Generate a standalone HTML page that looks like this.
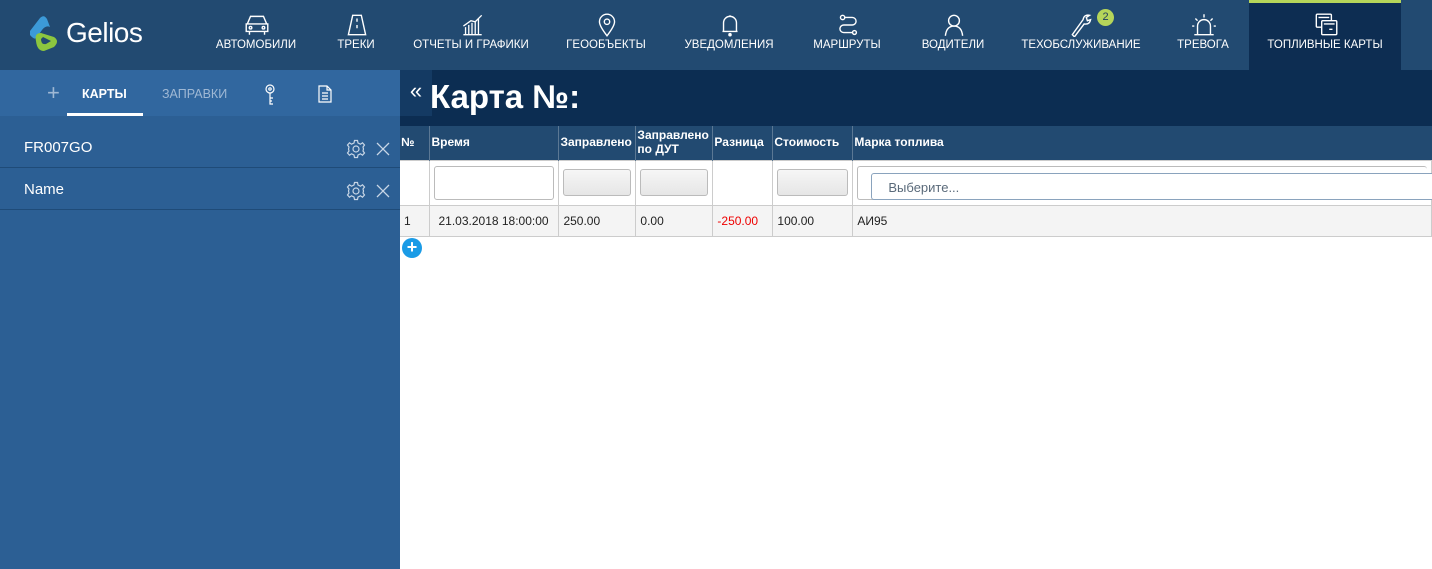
<!DOCTYPE html>
<html><head><meta charset="utf-8"><style>
*{box-sizing:border-box;margin:0;padding:0}
body{width:1432px;height:569px;overflow:hidden;background:#fff;font-family:"Liberation Sans","DejaVu Sans",sans-serif;position:relative}
.hdr{position:absolute;left:0;top:0;width:1432px;height:70px;background:#224a71}
.logo{position:absolute;left:24px;top:13px}
.logo span{position:absolute;left:42px;top:4px;color:#fff;font-size:28px;letter-spacing:-0.5px}
.nav{position:absolute;top:0;height:70px;text-align:center;color:#fff;font-size:11.5px}
.nav svg{position:absolute;top:13px;left:50%;margin-left:-13px;width:28px;height:24px}
.nav .t{position:absolute;top:39px;left:0;right:0;white-space:nowrap}
.act{background:#0d2d52;border-top:3px solid #b5d55a}
.side{position:absolute;left:0;top:70px;width:400px;height:499px;background:#2c5f94}
.tabs{position:absolute;left:0;top:70px;width:400px;height:46px;background:#31679f}
.item{position:absolute;left:0;width:400px;height:42px;border-bottom:1px solid #1f4b78;color:#fff;font-size:15px;padding:13px 0 0 24px}
.title{position:absolute;left:400px;top:70px;width:1032px;height:56px;background:#0c2d52}
.title h1{position:absolute;left:30px;top:8px;color:#fff;font-size:33px;font-weight:bold}
.coll{position:absolute;left:400px;top:70px;width:32px;height:46px;background:#143a63;color:#fff;font-size:22px;text-align:center;line-height:42px}
table{position:absolute;left:400px;top:126px;border-collapse:collapse;font-size:12px}
th{background:#224a71;color:#fff;font-weight:bold;text-align:left;vertical-align:top;padding:9px 1px 0;height:34px;border-left:1px solid #5b7894;line-height:14px}
td{border:1px solid #ccc;padding:0 4px;}
.f td{height:45px;background:#fff}
.d td{height:31px;background:#f4f4f4;color:#222}
.inp{height:31px;border:1px solid #bbb;border-radius:3px;background:linear-gradient(#f6f6f6,#e6e6e6)}
</style></head><body>
<div class="hdr">
 <div class="logo"><svg width="40" height="40" viewBox="0 0 40 40"><path d="M6 18 L16 5 Q20 1 23 6 L26 14 Q22 12 18 17 L13 24 Q11 28 6 22Z" fill="#3c9ad8"/><path d="M12 28 Q10 20 17 20 L30 24 Q36 28 30 34 L20 38 Q13 38 12 28Z M17 26 Q17 32 22 31 L27 28 L19 24Z" fill="#8cc63f" fill-rule="evenodd"/></svg><span>Gelios</span></div>
</div>
<div class="nav" style="left:206px;width:100px"><svg viewBox="0 0 26 22" fill="none" stroke="#fff" stroke-width="1.3"><path d="M4 10 L7 3 H19 L22 10 H4Z M3 10 H23 V17 H3Z M6 17 V20 M20 17 V20"/><circle cx="7" cy="13.5" r="1.2"/><circle cx="19" cy="13.5" r="1.2"/></svg><div class="t">АВТОМОБИЛИ</div></div>
<div class="nav" style="left:316px;width:80px"><svg viewBox="0 0 26 22" fill="none" stroke="#fff" stroke-width="1.3"><path d="M9 2 H17 L21 20 H5Z M13 5 V8 M13 11 V14"/></svg><div class="t">ТРЕКИ</div></div>
<div class="nav" style="left:406px;width:130px"><svg viewBox="0 0 26 22" fill="none" stroke="#fff" stroke-width="1.2"><path d="M5 20 H22 M7 20 V13 M10 20 V11 M13 20 V9 M16 20 V8 M19 20 V5 M5 12 L12 7 L16 8 L22 2"/></svg><div class="t">ОТЧЕТЫ И ГРАФИКИ</div></div>
<div class="nav" style="left:556px;width:100px"><svg viewBox="0 0 26 22" fill="none" stroke="#fff" stroke-width="1.3"><path d="M13 21 Q6 12 6 8 A7 7 0 0 1 20 8 Q20 12 13 21Z"/><circle cx="13" cy="8" r="2.5"/></svg><div class="t">ГЕООБЪЕКТЫ</div></div>
<div class="nav" style="left:674px;width:110px"><svg viewBox="0 0 26 22" fill="none" stroke="#fff" stroke-width="1.3"><path d="M7 17 V9 A6 6 0 0 1 19 9 V17 H6 H20 M13 2 V3"/><circle cx="13" cy="20" r="1" fill="#fff"/></svg><div class="t">УВЕДОМЛЕНИЯ</div></div>
<div class="nav" style="left:802px;width:90px"><svg viewBox="0 0 26 22" fill="none" stroke="#fff" stroke-width="1.3"><circle cx="8" cy="4" r="2"/><path d="M10 4 H17 A3.5 3.5 0 0 1 17 11 H9 A3.5 3.5 0 0 0 9 18 H17"/><circle cx="19" cy="18" r="1.8"/></svg><div class="t">МАРШРУТЫ</div></div>
<div class="nav" style="left:908px;width:90px"><svg viewBox="0 0 26 22" fill="none" stroke="#fff" stroke-width="1.3"><circle cx="13" cy="7" r="5"/><path d="M5 21 Q6 12 13 12 Q20 12 21 21"/></svg><div class="t">ВОДИТЕЛИ</div></div>
<div class="nav" style="left:1016px;width:130px"><svg viewBox="0 0 26 22" fill="none" stroke="#fff" stroke-width="1.3"><path d="M4 20 L6 22 L15 10 Q20 11 21 6 L18 7 L17 4 L20 2 Q15 1 14 6Z"/></svg><div class="t">ТЕХОБСЛУЖИВАНИЕ</div></div>
<div style="position:absolute;left:1097px;top:9px;width:17px;height:17px;border-radius:50%;background:#b5d55a;color:#1f3c5c;font-size:11px;text-align:center;line-height:17px">2</div>
<div class="nav" style="left:1163px;width:80px"><svg viewBox="0 0 26 22" fill="none" stroke="#fff" stroke-width="1.3"><path d="M7 20 V12 A6 6 0 0 1 19 12 V20 M4 20 H22 M13 1 V4 M5 5 L7 7 M21 5 L19 7 M2 12 H4 M22 12 H24"/></svg><div class="t">ТРЕВОГА</div></div>
<div class="nav act" style="left:1249px;width:152px"><svg viewBox="0 0 26 22" fill="none" stroke="#fff" stroke-width="1.3" style="top:10px"><rect x="4" y="1" width="14" height="12" rx="1"/><path d="M6 4 H16"/><rect x="9" y="7" width="14" height="13" rx="1" fill="#0d2d52"/><path d="M11 10 H21 M16 15 H19"/></svg><div class="t" style="top:36px">ТОПЛИВНЫЕ КАРТЫ</div></div>
<div class="side"></div>
<div class="tabs">
 <span style="position:absolute;left:47px;top:10px;color:#9fb8d4;font-size:22px;font-weight:300">+</span>
 <span style="position:absolute;left:82px;top:17px;color:#fff;font-size:12.5px;font-weight:bold">КАРТЫ</span>
 <div style="position:absolute;left:67px;top:43px;width:76px;height:3px;background:#fff"></div>
 <span style="position:absolute;left:162px;top:17px;color:#9fb8d4;font-size:12.5px">ЗАПРАВКИ</span>
 <svg style="position:absolute;left:263px;top:14px" width="14" height="22" viewBox="0 0 14 22" fill="none" stroke="#fff" stroke-width="1.2"><circle cx="7" cy="5" r="4"/><circle cx="7" cy="5" r="1.2"/><path d="M7 9 V20 H10 M7 14 H10 M7 17 H9"/></svg>
 <svg style="position:absolute;left:318px;top:15px" width="14" height="18" viewBox="0 0 14 18" fill="none" stroke="#fff" stroke-width="1.2"><path d="M1 1 H9 L13 5 V17 H1Z M9 1 V5 H13 M4 8 H10 M4 11 H10 M4 14 H10"/></svg>
</div>
<div class="item" style="top:126px">FR007GO</div>
<div class="item" style="top:168px">Name</div>
<svg style="position:absolute;left:346px;top:139px" width="20" height="20" viewBox="0 0 20 20" fill="none" stroke="#c8d6e6" stroke-width="1.2"><path d="M8.5 1.5 H11.5 L12 4 L14.5 5.2 L16.5 3.8 L18.5 6 L17 8 L17.5 10 L17 12 L18.5 14 L16.5 16.2 L14.5 14.8 L12 16 L11.5 18.5 H8.5 L8 16 L5.5 14.8 L3.5 16.2 L1.5 14 L3 12 L2.5 10 L3 8 L1.5 6 L3.5 3.8 L5.5 5.2 L8 4Z"/><circle cx="10" cy="10" r="3"/></svg>
<svg style="position:absolute;left:346px;top:181px" width="20" height="20" viewBox="0 0 20 20" fill="none" stroke="#c8d6e6" stroke-width="1.2"><path d="M8.5 1.5 H11.5 L12 4 L14.5 5.2 L16.5 3.8 L18.5 6 L17 8 L17.5 10 L17 12 L18.5 14 L16.5 16.2 L14.5 14.8 L12 16 L11.5 18.5 H8.5 L8 16 L5.5 14.8 L3.5 16.2 L1.5 14 L3 12 L2.5 10 L3 8 L1.5 6 L3.5 3.8 L5.5 5.2 L8 4Z"/><circle cx="10" cy="10" r="3"/></svg>
<svg style="position:absolute;left:376px;top:142px" width="14" height="14" stroke="#c8d6e6" stroke-width="1.3"><path d="M1 1 L13 13 M13 1 L1 13"/></svg>
<svg style="position:absolute;left:376px;top:184px" width="14" height="14" stroke="#c8d6e6" stroke-width="1.3"><path d="M1 1 L13 13 M13 1 L1 13"/></svg>
<div class="title"><h1>Карта №:</h1></div>
<div class="coll">«</div>
<table>
<tr><th style="width:30px;border-left:none">№</th><th style="width:129px">Время</th><th style="width:77px">Заправлено</th><th style="width:77px;padding-top:2px">Заправлено<br>по ДУТ</th><th style="width:60px">Разница</th><th style="width:80px">Стоимость</th><th style="width:579px">Марка топлива</th></tr>
<tr class="f"><td style="border-left:none"></td><td><div class="inp" style="background:#fff;height:34px"></div></td><td><div class="inp" style="height:27px"></div></td><td><div class="inp" style="height:27px"></div></td><td></td><td><div class="inp" style="height:27px"></div></td><td style="position:relative"><div class="inp" style="background:#fff;height:34px;border-right:none"></div><div style="position:absolute;left:18px;top:12px;width:570px;height:27px;border:1px solid #8aa3bd;border-radius:3px;background:#fff;color:#5a6a7a;font-size:13px;padding:6px 0 0 16px">Выберите...</div></td></tr>
<tr class="d"><td style="border-left:none">1</td><td style="padding-left:8px">21.03.2018 18:00:00</td><td>250.00</td><td>0.00</td><td style="color:#e00">-250.00</td><td>100.00</td><td>АИ95</td></tr>
</table>
<div style="position:absolute;left:402px;top:238px;width:20px;height:20px;border-radius:50%;background:#1a9be6;color:#fff;font-weight:bold;font-size:18px;text-align:center;line-height:19px">+</div>
</body></html>
